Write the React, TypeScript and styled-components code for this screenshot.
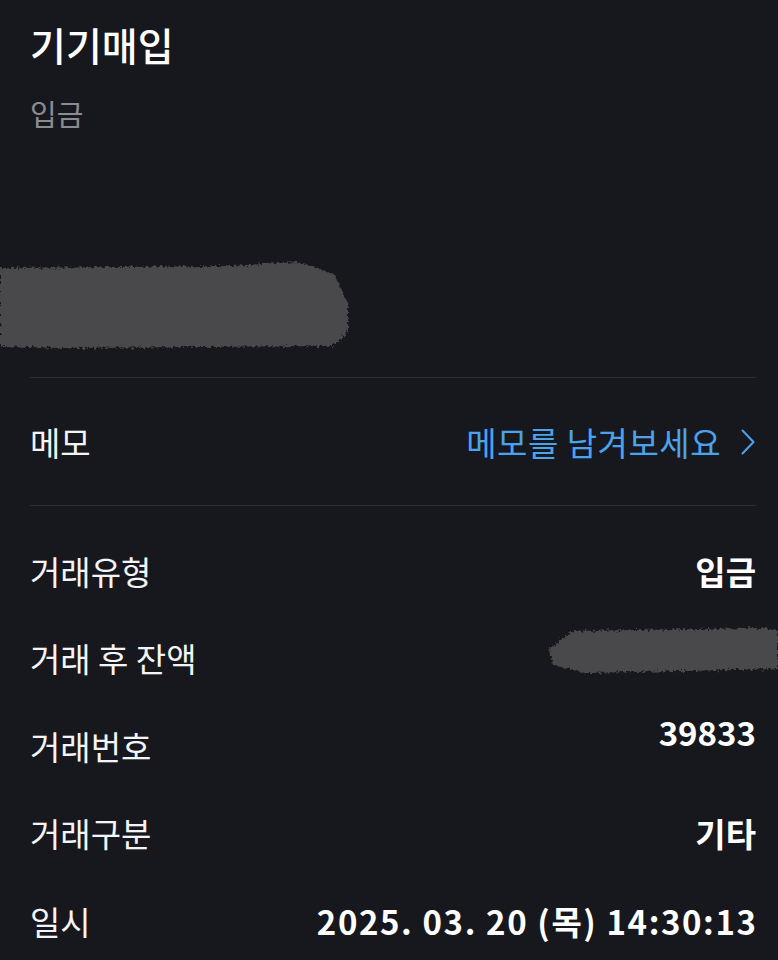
import React from 'react';
import styled, { createGlobalStyle } from 'styled-components';

const GlobalStyle = createGlobalStyle`
  html, body {
    margin: 0;
    padding: 0;
    background: #17181d;
  }
  body {
    font-family: "Noto Sans CJK KR", "Noto Sans", sans-serif;
    color: #f4f4f6;
  }
`;

const Page = styled.div`
  width: 778px;
  height: 960px;
  overflow: hidden;
  box-sizing: border-box;
  padding: 0 22px 0 30px;
  background: #17181d;
`;

const Header = styled.header`
  display: flex;
  flex-direction: column;
  padding-top: 18px;
`;

const Title = styled.h1`
  margin: 0;
  font-size: 39px;
  line-height: 52px;
  font-weight: 500;
  color: #ffffff;
`;

const Subtitle = styled.div`
  margin-top: 24px;
  font-size: 29px;
  line-height: 38px;
  color: #8b8c91;
`;

const AmountBlock = styled.div`
  margin: 128px 0 0 -30px;
  height: 117px;
`;

const Divider = styled.hr`
  margin: 0;
  border: none;
  height: 1px;
  background: #2b2c32;
`;

const MemoRow = styled.div`
  display: flex;
  align-items: center;
  justify-content: space-between;
  height: 127px;
`;

const Label = styled.span`
  font-size: 33px;
  line-height: 44px;
  font-weight: 400;
  color: #f4f4f6;
`;

const MemoLink = styled.button`
  display: flex;
  align-items: center;
  gap: 19px;
  padding: 0;
  border: none;
  background: none;
  font-family: inherit;
  font-size: 33px;
  line-height: 44px;
  letter-spacing: 0.5px;
  color: #4ba3ee;
  cursor: pointer;
`;

const Details = styled.div`
  display: flex;
  flex-direction: column;
  padding-top: 21px;
`;

const Row = styled.div`
  display: flex;
  align-items: center;
  justify-content: space-between;
  height: 87.5px;
`;

const Value = styled.span<{ $raised?: boolean; $wide?: boolean }>`
  font-size: 33px;
  line-height: 44px;
  font-weight: 700;
  color: #ffffff;
  letter-spacing: ${p => (p.$wide ? '1.6px' : '0')};
  margin-right: ${p => (p.$wide ? '-1.6px' : '0')};
  transform: translateY(${p => (p.$raised ? '-14px' : '0')});
`;

const MaskBox = styled.svg<{ $offset?: number }>`
  display: block;
  transform: translateY(${p => p.$offset ?? 0}px);
`;

const BalanceWrap = styled.div`
  margin-right: -22px;
`;

/* smudged redaction, rough edges via turbulence */
const Smudge = ({ w, h, id, d, offset }: { w: number; h: number; id: string; d: string; offset?: number }) => (
  <MaskBox width={w} height={h} viewBox={`0 0 ${w} ${h}`} $offset={offset}>
    <defs>
      <filter id={id} x="-5%" y="-20%" width="110%" height="140%">
        <feTurbulence type="fractalNoise" baseFrequency="0.35" numOctaves="2" seed="3" />
        <feDisplacementMap in="SourceGraphic" scale="7" />
      </filter>
    </defs>
    <path d={d} fill="#4a4a4c" filter={`url(#${id})`} />
  </MaskBox>
);

const Chevron = () => (
  <svg width="16" height="26" viewBox="0 0 16 26" fill="none">
    <path d="M2.5 1.5 L13.5 13 L2.5 24.5" stroke="#4ba3ee" strokeWidth="2" strokeLinecap="round" strokeLinejoin="round" />
  </svg>
);

const App: React.FC = () => {
  return (
    <>
      <GlobalStyle />
      <Page>
        <Header>
          <Title>기기매입</Title>
          <Subtitle>입금</Subtitle>
        </Header>

        <AmountBlock>
          <Smudge
            id="amt"
            w={352}
            h={90}
            d="M0 8 L230 6 L298 2 L334 14 L348 44 L348 72 L332 86 L60 88 L0 86 Z"
          />
        </AmountBlock>

        <Divider />
        <MemoRow>
          <Label>메모</Label>
          <MemoLink>
            메모를 남겨보세요
            <Chevron />
          </MemoLink>
        </MemoRow>
        <Divider />

        <Details>
          <Row>
            <Label>거래유형</Label>
            <Value>입금</Value>
          </Row>
          <Row>
            <Label>거래 후 잔액</Label>
            <BalanceWrap>
              <Smudge
                id="bal"
                w={233}
                h={52}
                offset={-7}
                d="M4 24 L28 6 L220 3 L233 5 L233 44 L40 48 L8 40 Z"
              />
            </BalanceWrap>
          </Row>
          <Row>
            <Label>거래번호</Label>
            <Value $raised>39833</Value>
          </Row>
          <Row>
            <Label>거래구분</Label>
            <Value>기타</Value>
          </Row>
          <Row>
            <Label>일시</Label>
            <Value $wide>2025. 03. 20 (목) 14:30:13</Value>
          </Row>
        </Details>
      </Page>
    </>
  );
};

export default App;
